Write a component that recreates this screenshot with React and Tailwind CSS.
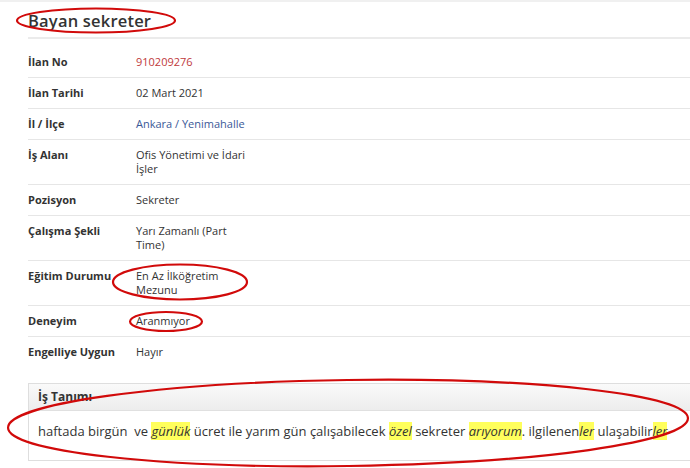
import React from "react";

const ROWS = [
  { label: "İlan No", value: "910209276", tone: "red" },
  { label: "İlan Tarihi", value: "02 Mart 2021" },
  { label: "İl / İlçe", value: "Ankara / Yenimahalle", tone: "blue" },
  { label: "İş Alanı", value: "Ofis Yönetimi ve İdari İşler" },
  { label: "Pozisyon", value: "Sekreter" },
  { label: "Çalışma Şekli", value: "Yarı Zamanlı (Part Time)" },
  { label: "Eğitim Durumu", value: "En Az İlköğretim Mezunu" },
  { label: "Deneyim", value: "Aranmıyor" },
  { label: "Engelliye Uygun", value: "Hayır", last: true },
];

function Mark({ children }) {
  return <em className="bg-[#ffff5c] italic">{children}</em>;
}

export default function App() {
  return (
    <div
      className="relative w-[690px] h-[468px] overflow-hidden bg-white text-[#333]"
      style={{ fontFamily: '"Open Sans", "DejaVu Sans", sans-serif' }}
    >
      <div className="border-t-2 border-[#f0f0f0]" />

      <div className="pl-[28px]">
        <div className="w-[700px]">
          {/* Başlık */}
          <h1 className="text-[16.5px] font-semibold tracking-[0.2px] leading-[24px] pt-[7px] pb-[4px] border-b-2 border-[#ebebeb] text-[#333]">
            Bayan sekreter
          </h1>

          {/* Bilgi tablosu */}
          <div className="mt-[8px]">
            {ROWS.map((r) => (
              <div
                key={r.label}
                className={`flex py-[8px] text-[11px] leading-[14px] ${r.last ? "" : "border-b border-[#e6e6e6]"}`}
              >
                <div className="w-[108px] font-bold text-[#333]">{r.label}</div>
                <div
                  className={`w-[118px] ${r.tone === "red" ? "text-[#c0393b]" : r.tone === "blue" ? "text-[#3b5998]" : "text-[#333]"}`}
                >
                  {r.value}
                </div>
              </div>
            ))}
          </div>

          {/* İş Tanımı */}
          <div className="mt-[16px] border border-[#dedede]">
            <div className="h-[27px] flex items-center px-[9px] bg-gradient-to-b from-[#fafafa] to-[#ededed] border-b border-[#e0e0e0] text-[12px] font-bold text-[#333]">
              İş Tanımı
            </div>
            <div className="h-[49px] px-[9px] pt-[12px] text-[13px] leading-[17px] text-[#333] whitespace-pre">
              haftada birgün  ve <Mark>günlük</Mark> ücret ile yarım gün çalışabilecek <Mark>özel</Mark> sekreter{" "}
              <Mark>arıyorum</Mark>. ilgilenen<Mark>ler</Mark> ulaşabilir<Mark>ler</Mark>
            </div>
          </div>
        </div>
      </div>

      {/* Kırmızı işaretler */}
      <svg
        className="absolute inset-0 pointer-events-none"
        width="690"
        height="468"
        viewBox="0 0 690 468"
        fill="none"
      >
        <g stroke="#d10a0a" strokeWidth="2.2">
          <ellipse cx="96" cy="20.5" rx="79" ry="12" />
          <ellipse cx="180" cy="282" rx="67" ry="17.5" />
          <ellipse cx="166" cy="321.5" rx="36" ry="9.5" />
          <ellipse cx="348" cy="423" rx="340" ry="43" transform="rotate(-0.8 348 423)" />
        </g>
      </svg>
    </div>
  );
}
